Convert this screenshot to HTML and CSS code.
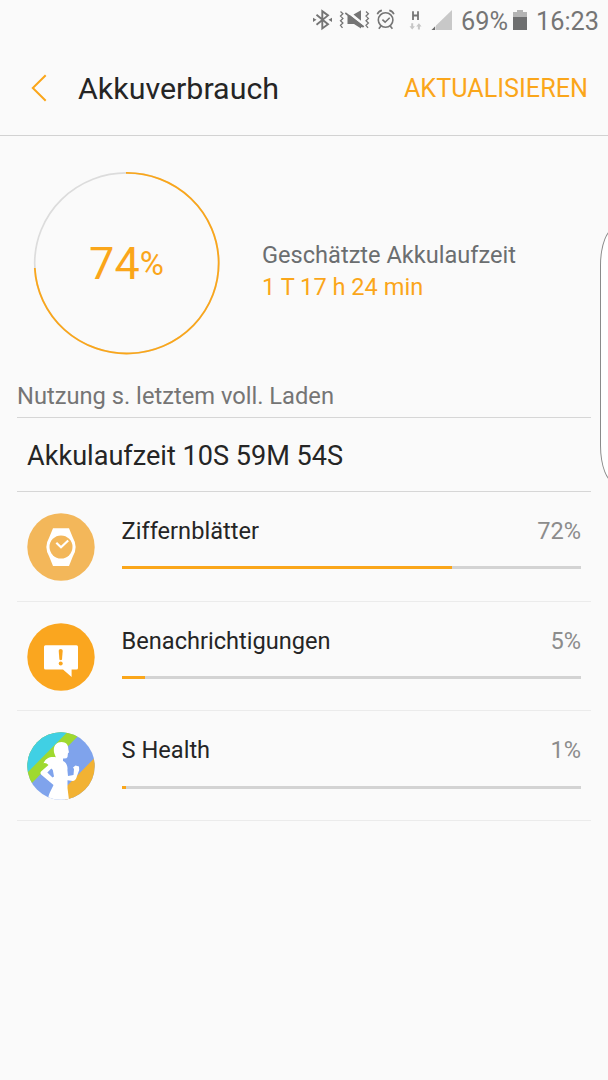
FILE: index.html
```
<!DOCTYPE html>
<html lang="de">
<head>
  <meta charset="UTF-8">
  <meta name="viewport" content="width=device-width, initial-scale=1.0">
  <title>Akkuverbrauch</title>
  <link rel="stylesheet" href="styles.css">
</head>
<body>
  <div class="statusbar">
    <svg class="status-icons" width="144" height="40" viewBox="312 0 144 40">
      <!-- bluetooth -->
      <g fill="none" stroke="#757575" stroke-width="1.9">
        <path d="M317.5 14.7L329 24.2L323.3 28.4V11.2L329 15.4L317.5 24.8"/>
      </g>
      <path d="M314 17.7L317.5 19.8L314 21.9zM333 17.7L329.5 19.8L333 21.9z" fill="#757575"/>
      <!-- vibrate, muted -->
      <path d="M341.5 11.5l2.4 2.3l-2.4 2.3l2.4 2.3l-2.4 2.3l2.4 2.3l-2.4 2.3l2 2.5M367 11.5l2.4 2.3l-2.4 2.3l2.4 2.3l-2.4 2.3l2.4 2.3l-2.4 2.3l2 2.5" fill="none" stroke="#757575" stroke-width="1.3"/>
      <path d="M354.5 14.5L362 10.2V20.8zM348.5 15.2h2.5L364.5 26L363.5 27.5L362 27V28.5L355 24H348.5z" fill="#757575"/>
      <path d="M346.3 13L364.8 26.8" fill="none" stroke="#757575" stroke-width="1.6"/>
      <!-- alarm -->
      <g fill="none" stroke="#757575" stroke-width="1.6">
        <circle cx="386.6" cy="20" r="7.3"/>
        <path d="M383.4 19.6l2.7 2.6l4.6-4.5M382 26l-2.2 2.8M391.2 26l2.2 2.8M378.3 14.3q1.2-3.2 4.6-3.9M394.9 14.3q-1.2-3.2-4.6-3.9"/>
      </g>
      <!-- mobile data -->
      <path d="M414 11.3V20M419 11.3V20M414 15.5H419" fill="none" stroke="#757575" stroke-width="1.8"/>
      <path d="M412.2 23.3h2v3h1.7l-2.7 3.3l-2.7-3.3h1.7zM418.9 29.6h2v-3h1.7l-2.7-3.3l-2.7 3.3h1.7z" fill="#c6c6c6"/>
      <path d="M453 10V30H437V25.5z" fill="#c8c8c8"/>
      <path d="M436.2 26.3V30H432.5z" fill="#6b6b6b"/>
    </svg>
    <span class="battery-level">69%</span>
    <svg class="battery" width="14" height="20" viewBox="0 0 14 20">
      <path d="M0 2H4V0H10V2H14V7H0z" fill="#b4b4b4"/>
      <path d="M0 7H14V20H0z" fill="#6e6f70"/>
    </svg>
    <span class="clock">16:23</span>
  </div>

  <header class="header">
    <svg class="back" width="16" height="28" viewBox="0 0 16 28">
      <path d="M14.7 1.2L1.8 14L14.7 26.8" fill="none" stroke="#faa61a" stroke-width="2"/>
    </svg>
    <h1>Akkuverbrauch</h1>
    <a class="refresh">AKTUALISIEREN</a>
  </header>

  <section class="summary">
    <div class="gauge">
      <svg width="188" height="184" viewBox="0 0 188 184">
        <ellipse cx="93.7" cy="92.2" rx="92" ry="90.3" fill="none" stroke="#dcdcdc" stroke-width="1.7"/>
        <path d="M93 1.9A92 90.3 0 1 1 1.8 97" fill="none" stroke="#faa61a" stroke-width="1.8"/>
      </svg>
      <div class="gauge-value">74<span>%</span></div>
    </div>
    <div class="estimate">
      <div class="estimate-label">Geschätzte Akkulaufzeit</div>
      <div class="estimate-time">1 T 17 h 24 min</div>
    </div>
  </section>

  <main class="usage">
    <h2>Nutzung s. letztem voll. Laden</h2>
    <div class="runtime">Akkulaufzeit 10S 59M 54S</div>

    <div class="item">
      <svg class="icon" width="68" height="68" viewBox="0 0 68 68">
        <circle cx="34" cy="34" r="33.7" fill="#f3b75a"/>
        <path d="M26 15.2H42L45.8 24.5Q51.5 34 45.8 43.5L42 53H26L22.2 43.5Q16.5 34 22.2 24.5z" fill="#fff"/>
        <circle cx="34" cy="34" r="11.5" fill="#f3b75a"/>
        <path d="M29.3 29.7L34 34.2L41.2 27.5" fill="none" stroke="#fff" stroke-width="2.2"/>
      </svg>
      <div class="info">
        <div class="line"><span class="name">Ziffernblätter</span><span class="percent">72%</span></div>
        <div class="bar"><div class="fill" style="width: 72%"></div></div>
      </div>
    </div>

    <div class="item">
      <svg class="icon" width="68" height="68" viewBox="0 0 68 68">
        <circle cx="34" cy="34" r="33.7" fill="#faa61f"/>
        <path d="M18.5 22.2H49.5Q51 22.2 51 23.7V45Q51 46.5 49.5 46.5H44.6V54L36 46.5H18.5Q17 46.5 17 45V23.7Q17 22.2 18.5 22.2z" fill="#fff"/>
        <path d="M31.7 27.7Q31.7 26 33.7 26T35.7 27.7L35 36.5Q33.7 37.8 32.4 36.5z" fill="#faa61f"/>
        <circle cx="33.7" cy="40.6" r="2" fill="#faa61f"/>
      </svg>
      <div class="info">
        <div class="line"><span class="name">Benachrichtigungen</span><span class="percent">5%</span></div>
        <div class="bar"><div class="fill" style="width: 5%"></div></div>
      </div>
    </div>

    <div class="item">
      <svg class="icon" width="68" height="68" viewBox="0 0 68 68">
        <clipPath id="disc"><circle cx="34" cy="34" r="33.7"/></clipPath>
        <g clip-path="url(#disc)">
          <path d="M0 0H68V68H0z" fill="#7fa3ec"/>
          <path d="M0 0H52V3L4 52L0 54z" fill="#9fd92f"/>
          <path d="M0 0H40.5L0 41z" fill="#40d0e4"/>
          <path d="M68 25.5V68H38V56z" fill="#f2b233"/>
          <path d="M27.2 21C25.6 14.5 29 10 34.5 10C39 10 41.5 13 41.3 17L42 20.5L41 21L40.5 25Q40 26.8 36 26.5V29C39.5 30.5 41 34.5 40.4 38L41 44L46.5 43L47 37L46 35.5L48.5 33.5L52 34.5L52.2 38L50 44Q49 48.5 46 49L40.5 48.2L40.5 56L42 68H21C21.5 61 25 57 26.5 53L14.3 42.7Q12.6 41 14.3 39.3L21.5 33Q19 30.5 16.5 31.3C19 26 23 24.5 28.8 25.3zM24.3 36.5L20.3 40.5L25.5 45.5L27 44.5L25.8 38z" fill="#fff" fill-rule="evenodd"/>
        </g>
      </svg>
      <div class="info">
        <div class="line"><span class="name">S Health</span><span class="percent">1%</span></div>
        <div class="bar"><div class="fill" style="width: 1%"></div></div>
      </div>
    </div>
  </main>

  <div class="edge-handle"></div>
</body>
</html>
```
FILE: styles.css
```
* {
  box-sizing: border-box;
}
body {
  margin: 0;
  height: 1080px;
  position: relative;
  overflow: hidden;
  background: #fafafa;
  color: #252525;
  font-family: Roboto, sans-serif;
}
h1, h2 {
  margin: 0;
  font-weight: 400;
}
svg {
  display: block;
  flex: none;
}

.statusbar {
  display: flex;
  align-items: center;
  justify-content: flex-end;
  height: 40px;
  padding-right: 9px;
  color: #757575;
  font-size: 25.3px;
  line-height: 40px;
}
.statusbar span {
  padding-top: 3px;
}
.battery-level {
  margin-left: 6px;
}
.battery {
  margin: 0 9px 0 5px;
}

.header {
  display: flex;
  align-items: center;
  height: 96px;
  padding: 2px 20px 0 31px;
  border-bottom: 1px solid #d2d2d2;
}
.back {
  margin-bottom: 2px;
}
.header h1 {
  margin-left: 31px;
  font-size: 30.4px;
  line-height: 40px;
}
.refresh {
  margin-left: auto;
  padding-top: 1px;
  color: #faa61a;
  font-size: 25.2px;
  line-height: 40px;
}

.summary {
  display: flex;
  height: 236px;
  padding: 35px 0 0 33px;
}
.gauge {
  position: relative;
  width: 188px;
  height: 184px;
}
.gauge-value {
  position: absolute;
  top: 1px;
  left: 0;
  width: 187px;
  line-height: 184px;
  display: flex;
  justify-content: center;
  color: #faa61a;
  font-size: 45px;
}
.gauge-value span {
  font-size: 33px;
}
.estimate {
  margin: 68px 0 0 41px;
  font-size: 23.6px;
  line-height: 32px;
}
.estimate-label {
  color: #6b6e70;
}
.estimate-time {
  color: #faa61a;
}

.usage {
  padding: 0 17px;
}
.usage h2 {
  height: 46px;
  padding-top: 8px;
  border-bottom: 1px solid #d6d6d6;
  color: #757575;
  font-size: 23.7px;
  line-height: 32px;
}
.runtime {
  height: 74px;
  padding: 1px 10px 0;
  border-bottom: 1px solid #d6d6d6;
  font-size: 27.1px;
  line-height: 74px;
}
.item {
  display: flex;
  height: 109.7px;
  padding: 21px 10px 0;
  border-bottom: 1px solid #ebebeb;
}
.icon {
  margin-left: -0.4px;
}
.info {
  flex: 1;
  margin-left: 27px;
}
.line {
  display: flex;
  justify-content: space-between;
  height: 53.2px;
  font-size: 23.6px;
  line-height: 36px;
}
.percent {
  color: #8c8c8c;
}
.bar {
  height: 3px;
  background: #d3d3d3;
}
.fill {
  height: 3px;
  background: #faa61a;
}

/* edge panel grip, runs off the right side */
.edge-handle {
  position: absolute;
  top: 228px;
  left: 600px;
  width: 30px;
  height: 255px;
  border: 1px solid #8a8a8a;
  border-radius: 16px / 40px;
  background: #fff;
}
```
